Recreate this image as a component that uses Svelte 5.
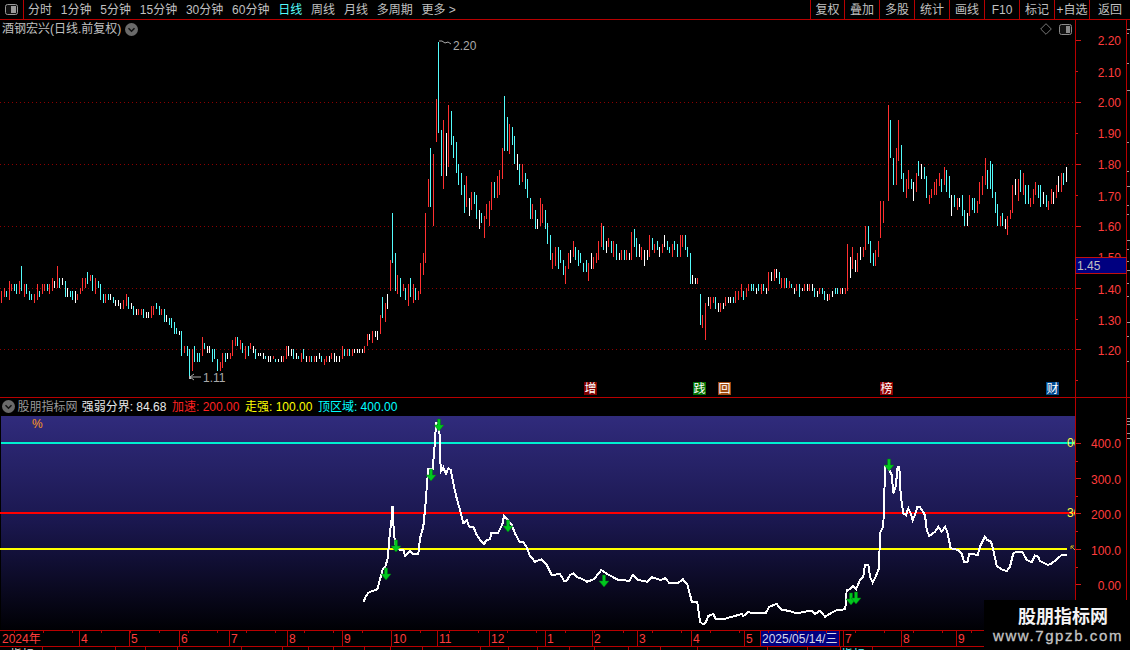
<script>
  const periods = [
    ['分时', 0], ['1分钟', 0], ['5分钟', 0], ['15分钟', 0], ['30分钟', 0], ['60分钟', 0],
    ['日线', 1], ['周线', 0], ['月线', 0], ['多周期', 0], ['更多 >', 0]
  ];
  const tools = [
    ['复权', 34], ['叠加', 35], ['多股', 35], ['统计', 35], ['画线', 35],
    ['F10', 35], ['标记', 35], ['+自选', 35], ['返回', 41]
  ];
  const colors = { r: '#ff3030', c: '#54fcfc', w: '#ffffff' };

  // candle groups: readings at x3 scale with their origin
  const groups = [
    [0, 250, `4,122,160r 13,114,140r 19,122,141c 28,93,150r 34,101,122r 43,101,122c 49,101,132c 58,93,131r 64,48,122c 73,101,141r 79,101,132c 88,122,150c 94,131,150c 103,131,160r 112,101,150r 118,122,141c 127,101,132r 133,101,122r 142,101,122c 148,101,132r 157,84,122r 163,93,115w 172,48,115r 178,84,114c 187,84,105w 196,93,141c 202,114,141w 211,122,141c 217,122,150c 226,122,159w 232,131,150r 241,114,132r 247,84,122r 256,84,115r 262,66,102c 271,75,93r 277,75,122c 286,84,132r 295,93,114c 301,102,150c 310,132,160c 316,132,160r 325,132,150c 331,132,150w 340,141,160c 346,150,168w 355,150,168w 361,159,177w 370,150,177r 379,132,168r 385,141,177c 394,159,177w 400,168,195c 409,177,195w 415,177,195r 424,177,195r 430,177,204c 439,186,204w 445,186,204w 454,168,204r 460,168,195r 469,159,177c 478,168,195c 484,177,195r 493,177,217c 499,195,217w 508,204,226c 514,204,233c 523,217,252c 529,235,252c 538,243,254w 544,243,318c 553,288,309r 562,288,318c 568,297,385c 577,297,363r 583,288,336c 592,309,336c 598,309,336c 607,261,318r 613,279,297c 622,288,309w 628,288,309w 637,297,336c 643,297,327c 652,327,363c 661,336,363r 667,309,354r 676,309,336c 682,309,327w 691,309,327r 697,270,318r 706,261,288r 712,261,288c`],
    [240, 190, `0,450,477r 7,459,489c 16,468,507r 25,468,498c 31,459,477r 40,468,489w 46,477,507c 55,489,498w 61,489,498w 70,489,507w 76,498,507c 85,498,516w 91,498,516w 100,498,507r 106,507,516c 115,507,516w 124,498,516w 130,498,516r 139,468,507r 145,468,498w 154,477,498w 160,477,507c 169,489,507w 175,498,507c 184,489,516r 190,477,507c 199,498,516w 208,498,516r 214,498,516c 223,498,516r 229,498,516w 238,489,507w 244,498,516c 253,507,525r 259,498,516r 268,498,516w 274,489,507r 283,489,516w 289,498,516w 298,498,516w 307,468,507r 313,477,498c 322,477,498r 328,477,498c 337,477,498r 343,477,489w 352,477,489w 358,477,489w 367,477,489w 373,468,489r 382,432,468r 388,432,450w 397,423,459r 406,423,441w 412,423,450w 421,375,432r 427,321,384c 436,339,396r 442,312,357w 451,210,303r 457,69,219c 466,189,303c 472,255,312r 481,264,321c 490,282,303r 496,294,330c 505,282,348r 511,264,321c 520,282,339r 526,294,330c 535,303,330r 541,219,312r 550,189,255r 556,69,219r`],
    [370, 30, `175,447,530r 181,354,530c 190,372,588r 198,207,335r 205,35,308c 213,300,437c 220,270,476r 228,309,437w 235,225,410r 243,243,344c 250,318,383c 258,336,428c 265,402,465c 273,429,494c 282,465,548c 289,438,531r 297,504,557w 304,487,540r 312,487,521c 319,495,566c 327,540,597w 334,549,579c 342,558,624r 349,522,567r 358,513,588r 364,456,540r 373,456,503c 381,438,503r 388,420,494r 396,354,446r 403,198,362c 411,261,362c 418,282,372r 426,291,345c 433,318,401c 441,372,419w 448,402,465c 457,402,456r 465,429,476c 472,447,503c 480,504,566c 487,522,566r 495,540,597c 502,567,597w 511,504,588r 517,522,579r 526,540,597c 532,579,642c`],
    [240, 190, `931,135,210c 937,189,237r 946,171,228r 955,171,237c 961,180,219c 970,210,255c 976,228,282r 985,189,237r`],
    [570, 210, `0,120,159w 10,93,141r 16,111,150c 25,120,168c 31,129,159c 40,159,186c 49,150,186c 55,159,213r 64,129,177w 70,141,177r 79,129,159r 85,93,150r 94,39,111r 100,48,120c 109,93,129w 115,84,111r 124,93,129c 130,93,141r 139,102,150c 148,129,150w 154,120,150r 163,120,150c 169,120,150r 178,129,150w 184,66,150r 193,57,111c 199,84,141c 208,102,141w 214,111,150r 223,120,168w 232,120,150w 238,75,141r 247,84,120c 253,102,129r 262,93,120c 268,111,141w 277,102,129r 283,75,111w 292,93,120c 298,111,129c 307,102,141r 313,93,120c 322,102,141c 331,75,141r 337,75,111r 346,75,120c 352,111,141c 361,129,222c 367,195,222w 376,204,222w 382,204,222r 391,252,345c 397,315,354r 406,279,390r 415,261,288w 421,261,297r 430,261,279r 436,261,297c 445,279,306w 451,279,306r 460,279,297w 466,261,288r 475,261,279w 481,261,279w 490,261,279c 496,243,279r 505,243,270r 514,222,261r 520,243,270c 529,234,261r 535,222,243r 544,222,243c 550,222,243c 559,234,252w 565,222,243c 574,222,252r 580,222,243c 589,234,252w 595,186,243r 604,186,213w 613,177,213r 619,177,204w 628,186,222c 634,204,234r 643,204,234r 649,204,234c 658,213,234r 664,222,234c 673,234,252w 679,222,243r 688,222,261c 697,234,243w 703,222,243r 712,222,243w 718,222,243r 727,222,243w 733,234,261c 742,243,261w 748,234,252r 757,234,252c 763,243,270c 772,252,273w 778,252,270r 787,243,261w 796,234,252c 802,234,252c 811,234,252r 817,234,252w 826,234,252r 832,102,243r 841,141,204w 847,111,177r 856,150,186w 862,129,186r`],
    [860, 90, `0,471,510w 10,471,501r 16,408,480r 25,408,462c 31,453,519c 40,489,528c 46,480,528r 55,453,501r 61,333,444r 70,333,399r 85,45,333r 91,90,204c 100,204,285c 109,174,285r 115,90,213r 124,165,267c 130,249,306c 139,267,324r 145,240,297r 154,267,297c 160,276,333w 169,249,306r 175,213,258c 184,222,267w 193,231,267c 199,258,324c 208,315,342r 214,297,324r 223,276,315r 229,267,315r 238,249,288r 244,267,306c 253,231,285r 259,240,306c 268,258,324c 274,315,378w 283,315,351c 292,324,360r 298,324,351w 307,315,378c 313,360,408c 322,369,408w 328,315,378r 337,324,360c 343,324,369c 352,333,369r 358,276,342r 367,258,315r 376,204,285r 382,240,297c 391,213,297c 397,222,324c 406,306,369c 412,342,408c 421,378,408r 427,369,408c 436,387,417w 442,378,435r 451,360,387r 457,285,369r 466,267,315w 475,267,333r 481,240,306c 490,249,315r 496,285,342c 505,285,342c 511,324,351r 520,297,342r 526,276,315r 535,285,324c 541,285,351c 550,306,342w 559,315,351c 565,333,360r 574,297,342r 580,306,342w 589,285,324r 595,258,306w 604,249,306r 610,249,285c 619,231,276w`]
  ];

  const candles = groups.flatMap(([ox, oy, s]) =>
    s.split(' ').map((t) => {
      const c = t.slice(-1);
      const [x, a, b] = t.slice(0, -1).split(',').map(Number);
      return { x: Math.floor(ox + x / 3), y: oy + a / 3, h: Math.max(1, (b - a) / 3), fill: colors[c] };
    })
  );

  const seg = (pts, sx, sy, ox, oy) => pts.map(([x, y]) => [ox + x / sx, oy + y / sy]);
  const osc = [
    ...seg([[70,577],[77,560],[85,548],[100,542],[112,538],[122,500],[128,478],[136,470],[143,445],[150,365],[155,325],[155,290],[160,290],[160,340],[165,400],[172,418],[190,420],[196,438],[210,422],[220,432],[235,432],[240,385],[250,350],[256,290],[262,210],[265,178],[278,178],[282,130],[285,95],[288,40],[297,40],[300,100],[302,185],[310,172],[318,192],[325,175],[332,180],[340,220],[350,265],[360,300],[370,340],[380,330],[388,350],[400,350],[410,375],[422,392],[432,402],[440,390],[450,388],[454,368],[475,368],[488,340],[492,317],[497,322],[505,332],[515,345],[525,370],[538,395],[550,396],[560,412],[570,438],[585,455],[605,448],[620,465],[635,495],[660,492],[672,512],[680,512],[690,495],[700,490],[712,502],[720,504]], 3, 3, 340, 410),
    ...seg([[1315,65],[1330,58],[1347,30],[1360,42],[1385,60],[1410,62],[1417,45],[1430,60],[1450,65],[1460,52],[1480,60],[1490,55],[1500,70],[1518,70],[1530,58],[1540,75],[1550,127],[1562,127],[1568,185]], 2.24, 3, 0, 560),
    ...seg([[68,72],[76,70],[85,48],[100,42],[108,58],[130,58],[150,52],[165,48],[185,42],[190,48],[205,36],[220,40],[245,38],[258,38],[268,20],[290,12],[305,30],[325,32],[350,40],[375,35],[395,32],[405,42],[420,32],[435,50],[455,38],[470,30],[496,28]], 3, 3, 680, 600),
    ...seg([[50,570],[60,568],[68,558],[78,568],[90,540],[100,530],[105,494],[115,494],[120,530],[128,548],[135,535],[147,505],[150,400],[160,378],[163,290],[165,198],[172,198],[185,225],[190,280],[197,260],[203,200],[208,200],[212,285],[220,340],[228,345],[235,325],[242,340],[248,360],[255,345],[262,322],[270,322],[285,345],[290,390],[298,408],[315,395],[325,380],[335,395],[345,380],[352,395],[362,445],[385,450],[395,462],[403,487],[412,487],[418,462],[430,463],[443,465],[450,440],[465,410],[472,420],[483,425],[490,450],[500,498],[515,508],[530,513],[540,500],[550,460],[560,455],[578,457],[590,480],[605,487],[615,467],[625,470],[630,483],[640,488],[655,495],[665,490],[680,478],[695,465],[710,465]], 3, 3, 830, 400)
  ].map(([x, y]) => `${x.toFixed(1)},${y.toFixed(1)}`).join(' ');

  const arrows = [[386, 568], [396, 540], [431, 469], [439, 419], [508, 520], [604, 575], [851, 593], [856, 592], [889, 459]];
  const arrowPts = (x, y) => `${x - 1.5},${y} ${x + 1.5},${y} ${x + 1.5},${y + 6} ${x + 5},${y + 6} ${x},${y + 12} ${x - 5},${y + 6} ${x - 1.5},${y + 6}`;

  const priceLabels = [['2.20', 41], ['2.10', 73], ['2.00', 103], ['1.90', 134], ['1.80', 165], ['1.70', 197], ['1.60', 227], ['1.50', 258], ['1.40', 290], ['1.30', 321], ['1.20', 351]];
  const priceTicks = [[40, 5], [71, 2], [102, 5], [133, 2], [164, 5], [195, 2], [226, 5], [257, 2], [288, 5], [319, 2], [349, 5], [380, 2]];
  const sideTicks = [29, 33, 63, 90, 142, 171, 186, 205, 214, 240, 249, 261, 270, 283, 296, 322, 336, 361];
  const grid = [102, 164, 226, 288, 349];
  const tags = [
    { x: 584, t: '增', bg: '#800000' },
    { x: 693, t: '践', bg: '#007000' },
    { x: 718, t: '回', bg: '#a04a10' },
    { x: 880, t: '榜', bg: '#900000' },
    { x: 1046, t: '财', bg: '#004a90' }
  ];
  const oscLabels = [['400.0', 444], ['300.0', 480], ['200.0', 515], ['100.0', 551], ['0.00', 586]];
  const oscTicks = [[443, 5], [461, 2], [478, 5], [496, 2], [513, 5], [531, 2], [549, 5], [567, 2], [584, 5]];
  const months = [['2024年', 1], ['4', 80], ['5', 130], ['6', 180], ['7', 230], ['8', 288], ['9', 343], ['10', 392], ['11', 438], ['12', 490], ['1', 546], ['2', 593], ['3', 638], ['4', 692], ['5', 745], ['7', 844], ['8', 902], ['9', 957]];
  const minor = Array.from({ length: 34 }, (_, i) => 14 + i * 29);
  const stubs = [42, 115, 145, 177, 241, 282, 308, 333, 364, 390, 422, 480, 508, 537, 569, 594, 628, 660, 697, 767, 807, 840, 872];
</script>

<div class="app">
  <header class="topbar">
    <div class="toggle">
      <svg width="13" height="11" viewBox="0 0 13 11"><rect x="0.5" y="0.5" width="12" height="10" rx="2" fill="#111" stroke="#9a9a9a"/><rect x="6" y="2" width="5" height="7" fill="#9a9a9a"/></svg>
    </div>
    <nav class="periods">
      {#each periods as [label, active]}
        <span class:active>{label}</span>
      {/each}
    </nav>
    <nav class="tools">
      {#each tools as [label, w]}
        <span style="width:{w}px">{label}</span>
      {/each}
    </nav>
  </header>

  <section class="price">
    <div class="plot">
      <div class="title">
        <span>酒钢宏兴(日线.前复权)</span>
        <svg class="chev" width="13" height="13" viewBox="0 0 13 13"><circle cx="6.5" cy="6.5" r="6.5" fill="#6a6a6a"/><path d="M3.5 5.2 6.5 8.2 9.5 5.2" fill="none" stroke="#111" stroke-width="1.5"/></svg>
        <span class="spring"></span>
        <svg width="12" height="12" viewBox="0 0 12 12"><path d="M6 .7 11.3 6 6 11.3 .7 6Z" fill="none" stroke="#777"/></svg>
        <svg class="mini" width="13" height="11" viewBox="0 0 13 11"><rect x="0.5" y="0.5" width="12" height="10" rx="2" fill="#111" stroke="#8a8a8a"/><rect x="7" y="2" width="4" height="7" fill="#8a8a8a"/></svg>
      </div>
      <svg class="canvas" width="1075" height="358" viewBox="0 38 1075 358">
        {#each grid as y}
          <line x1="0" x2="1075" y1={y + 0.5} y2={y + 0.5} stroke="#8c0000" stroke-dasharray="1 3"/>
        {/each}
        <g shape-rendering="crispEdges">
          {#each candles as c}
            <rect x={c.x} y={c.y} width="1" height={c.h} fill={c.fill}/>
          {/each}
        </g>
        <path d="M439 41H442M442 41 445 43 448 42 451 44" fill="none" stroke="#aaa"/>
        <text class="note" x="453" y="46">2.20</text>
        <rect x="189" y="376" width="2" height="3" fill="#bbb"/>
        <path d="M190 377 194 374M190 377 194 380M190 377H201" fill="none" stroke="#aaa"/>
        <text class="note" x="203" y="378">1.11</text>
        {#each tags as t}
          <rect x={t.x} y="382" width="13" height="13" fill={t.bg}/>
          <text class="tag" x={t.x + 6.5} y="389">{t.t}</text>
        {/each}
      </svg>
    </div>
    <svg class="axis" width="55" height="377" viewBox="1075 20 55 377">
      <line x1="1075.5" x2="1075.5" y1="20" y2="397" stroke="#b80000"/>
      <line x1="1126.5" x2="1126.5" y1="20" y2="397" stroke="#b80000"/>
      {#each priceTicks as [y, w]}
        <line x1="1076" x2={1076 + w} y1={y + 0.5} y2={y + 0.5} stroke="#d01818"/>
      {/each}
      {#each sideTicks as y, i}
        <line x1="1127" x2={i % 3 ? 1129 : 1130} y1={y + 0.5} y2={y + 0.5} stroke="#999"/>
      {/each}
      {#each priceLabels as [t, y]}
        <text class="ax" x="1121" {y}>{t}</text>
      {/each}
      <rect x="1075.5" y="257.5" width="51" height="16" fill="#000080" stroke="#c01010"/>
      <text class="cur" x="1077" y="265.5">1.45</text>
    </svg>
  </section>

  <section class="osc">
    <div class="plot">
      <div class="legend">
        <svg width="13" height="13" viewBox="0 0 13 13"><circle cx="6.5" cy="6.5" r="6.5" fill="#6a6a6a"/><path d="M3.5 5.2 6.5 8.2 9.5 5.2" fill="none" stroke="#111" stroke-width="1.5"/></svg>
        <span class="name">股朋指标网</span>
        <span class="white">强弱分界: 84.68</span>
        <span class="red">加速: 200.00</span>
        <span class="yellow">走强: 100.00</span>
        <span class="cyan">顶区域: 400.00</span>
      </div>
      <svg class="canvas" width="1075" height="214" viewBox="0 416 1075 214">
        <defs>
          <linearGradient id="sky" x1="0" y1="0" x2="0" y2="1">
            <stop offset="0" stop-color="#302b7c"/>
            <stop offset="0.5" stop-color="#1a174e"/>
            <stop offset="1" stop-color="#000004"/>
          </linearGradient>
        </defs>
        <rect x="1" y="416" width="1074" height="214" fill="url(#sky)"/>
        <text class="pct" x="32" y="424">%</text>
        <g shape-rendering="crispEdges">
          <rect x="1" y="442" width="1074" height="2" fill="#00f0d0"/>
          <rect x="0" y="512" width="1075" height="2" fill="#ff0000"/>
          <rect x="0" y="548" width="1067" height="2" fill="#ffff00"/>
        </g>
        <text class="lvl" x="1067" y="443">00</text>
        <text class="lvl" x="1067" y="513">30</text>
        <path d="M1071 546 1076 551M1071 546V549M1071 546H1074" fill="none" stroke="#c8b020"/>
        <polyline points={osc} fill="none" stroke="#fff" stroke-width="2" stroke-linejoin="miter" shape-rendering="crispEdges"/>
        {#each arrows as [x, y]}
          <polygon points={arrowPts(x, y)} fill="#00c81e" stroke="#007a10" stroke-width="0.5"/>
        {/each}
      </svg>
    </div>
    <svg class="axis" width="55" height="233" viewBox="1075 397 55 233">
      <line x1="1075.5" x2="1075.5" y1="397" y2="630" stroke="#b80000"/>
      <line x1="1126.5" x2="1126.5" y1="397" y2="630" stroke="#b80000"/>
      {#each oscTicks as [y, w]}
        <line x1="1076" x2={1076 + w} y1={y + 0.5} y2={y + 0.5} stroke="#d01818"/>
      {/each}
      {#each [418, 421, 424, 433, 438] as y}
        <line x1="1127" x2="1130" y1={y + 0.5} y2={y + 0.5} stroke="#999"/>
      {/each}
      {#each oscLabels as [t, y]}
        <text class="ax" x="1121" {y}>{t}</text>
      {/each}
    </svg>
  </section>

  <svg class="time" width="1130" height="20" viewBox="0 630 1130 20">
    <rect x="761" y="631" width="78" height="15" fill="#000080"/>
    {#each minor as x}
      <line x1={x + 0.5} x2={x + 0.5} y1="631" y2="633" stroke="#b80000"/>
    {/each}
    {#each months as [t, x], i}
      {#if i > 0}
        <line x1={x - 0.5} x2={x - 0.5} y1="631" y2="646" stroke="#b80000"/>
      {/if}
      <text class="mon" x={x + 1} y="639">{t}</text>
    {/each}
    <line x1="760.5" x2="760.5" y1="631" y2="646" stroke="#b80000"/>
    <line x1="839.5" x2="839.5" y1="631" y2="646" stroke="#b80000"/>
    <text class="date" x="762" y="639">2025/05/14/三</text>
    <line x1="0" x2="1130" y1="630.5" y2="630.5" stroke="#b80000"/>
    <line x1="0" x2="1130" y1="646.5" y2="646.5" stroke="#b80000"/>
    {#each stubs as x}
      <line x1={x + 0.5} x2={x + 0.5} y1="647" y2="650" stroke="#b80000"/>
    {/each}
    <text class="stub" x="10" y="655">指标</text>
    <text class="stubc" x="841" y="655">指标</text>
  </svg>

  <aside class="mark">
    <strong>股朋指标网</strong>
    <span>www.7gpzb.com</span>
  </aside>
</div>

<style>
  :global(body) {
    margin: 0;
    background: #000;
  }
  .app {
    position: relative;
    width: 1130px;
    height: 650px;
    overflow: hidden;
    background: #000;
    color: #c0c0c0;
    font: 12px/1 "Liberation Sans", "Noto Sans CJK SC", sans-serif;
    display: flex;
    flex-direction: column;
  }
  svg {
    display: block;
    flex: none;
  }
  svg text {
    font-family: "Liberation Sans", "Noto Sans CJK SC", sans-serif;
    font-size: 12px;
    dominant-baseline: central;
  }
  .topbar {
    height: 19px;
    flex: none;
    display: flex;
    align-items: stretch;
    border-bottom: 1px solid #b80000;
  }
  .toggle {
    width: 23px;
    border-right: 1px solid #b80000;
    display: flex;
    align-items: center;
    justify-content: center;
    box-sizing: content-box;
  }
  .periods {
    display: flex;
    align-items: center;
    gap: 8.8px;
    padding-left: 4px;
    flex: 1;
  }
  .periods .active {
    color: #54fcfc;
  }
  .tools {
    display: flex;
  }
  .tools span {
    box-sizing: border-box;
    border-left: 1px solid #b80000;
    display: flex;
    align-items: center;
    justify-content: center;
  }
  .price {
    display: flex;
    height: 377px;
    flex: none;
    border-bottom: 1px solid #b80000;
    box-sizing: content-box;
  }
  .plot {
    width: 1075px;
    flex: none;
  }
  .title {
    height: 18px;
    padding: 0 2px;
    display: flex;
    align-items: center;
  }
  .chev {
    margin-left: 4px;
  }
  .spring {
    flex: 1;
  }
  .mini {
    margin: 0 1px 0 7px;
  }
  .note {
    fill: #aaa;
  }
  .tag {
    fill: #fff;
    text-anchor: middle;
  }
  .ax {
    fill: #ff3c3c;
    text-anchor: end;
  }
  .cur {
    fill: #c0c0c0;
  }
  .osc {
    display: flex;
    height: 233px;
    flex: none;
    margin-top: -1px;
  }
  .legend {
    height: 19px;
    display: flex;
    align-items: center;
    padding-left: 2px;
    gap: 5.6px;
  }
  .legend .name {
    margin: 0 -1.5px 0 -3px;
    color: #999;
  }
  .legend .white {
    color: #e8e8e8;
  }
  .legend .red {
    color: #ff2020;
  }
  .legend .yellow {
    color: #ffff00;
  }
  .legend .cyan {
    color: #00ffff;
  }
  .pct {
    fill: #ff9a20;
  }
  .lvl {
    fill: #ffff40;
  }
  .time {
    flex: none;
  }
  .mon {
    fill: #ff3c3c;
  }
  .date {
    fill: #d8d8e8;
  }
  .stub {
    fill: #ddd;
  }
  .stubc {
    fill: #54fcfc;
  }
  .mark {
    position: absolute;
    right: 0;
    bottom: 0;
    width: 146px;
    height: 50px;
    box-sizing: border-box;
    padding-left: 10px;
    background: #000;
    display: flex;
    flex-direction: column;
    align-items: center;
    justify-content: center;
    gap: 2px;
    color: #c4c4c4;
  }
  .mark strong {
    color: #f4f4f4;
    font-size: 18px;
    font-weight: 700;
    margin-left: 2px;
  }
  .mark span {
    font-size: 15px;
    letter-spacing: 1.6px;
    margin-left: -8px;
    -webkit-text-stroke: 0.3px #c4c4c4;
  }
</style>
